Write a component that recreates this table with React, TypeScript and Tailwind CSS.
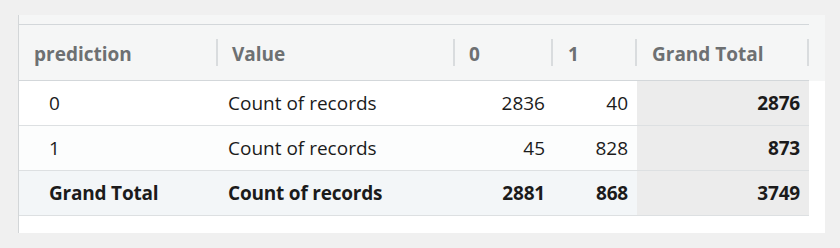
import React from "react";

interface Row {
  label: string;
  value: string;
  c0: number;
  c1: number;
  total: number;
  kind: "plain" | "alt" | "total";
}

const rows: Row[] = [
  { label: "0", value: "Count of records", c0: 2836, c1: 40, total: 2876, kind: "plain" },
  { label: "1", value: "Count of records", c0: 45, c1: 828, total: 873, kind: "alt" },
  { label: "Grand Total", value: "Count of records", c0: 2881, c1: 868, total: 3749, kind: "total" },
];

const font = { fontFamily: "'Open Sans', Lato, sans-serif" };

function HeadCell({ label, width, pad }: { label: string; width: string; pad: string }) {
  return (
    <div className={`${width} flex items-center justify-between`}>
      <span className={`${pad} pt-[3px]`}>{label}</span>
      <div className="h-[27px] w-[2px] bg-[#d9dcde]" />
    </div>
  );
}

export default function App() {
  return (
    <div
      className="w-[840px] h-[248px] bg-[#f0f0f0] pt-[15px] pl-[18px] overflow-hidden"
      style={font}
    >
      <div className="w-[807px] h-[218px] bg-white border-l border-[#d3d6d8] flex flex-col">
        <div className="bg-[#f5f6f6] pt-[9px]">
          <div className="w-[790px] h-[57px] border-t border-b border-[#d3d7da] flex text-[19px] font-bold text-[#6d7072]">
            <HeadCell label="prediction" width="w-[199px]" pad="pl-[15px]" />
            <HeadCell label="Value" width="w-[237px]" pad="pl-[14px]" />
            <HeadCell label="0" width="w-[98px]" pad="pl-[14px]" />
            <HeadCell label="1" width="w-[84px]" pad="pl-[15px]" />
            <HeadCell label="Grand Total" width="w-[172px]" pad="pl-[15px]" />
          </div>
        </div>
        <div className="w-[790px] text-[19px] text-[#1b1b1b]">
          {rows.map((r) => {
            const bold = r.kind === "total" ? "font-bold tracking-[-0.2px]" : "";
            const bg =
              r.kind === "total" ? "bg-[#f3f6f8]" : r.kind === "alt" ? "bg-[#fcfdfd]" : "bg-white";
            return (
              <div key={r.label} className={`flex h-[45px] border-b border-[#dde0e2] ${bg}`}>
                <div className={`w-[199px] flex items-center pl-[30px] ${bold}`}>{r.label}</div>
                <div className={`w-[237px] flex items-center pl-[10px] ${bold}`}>{r.value}</div>
                <div className={`w-[98px] flex items-center justify-end pr-[8px] ${bold}`}>{r.c0}</div>
                <div className={`w-[84px] flex items-center justify-end pr-[9px] ${bold}`}>{r.c1}</div>
                <div className="w-[172px] flex items-center justify-end pr-[9px] font-bold tracking-[-0.2px] bg-[#ececec]">
                  {r.total}
                </div>
              </div>
            );
          })}
        </div>
      </div>
    </div>
  );
}
